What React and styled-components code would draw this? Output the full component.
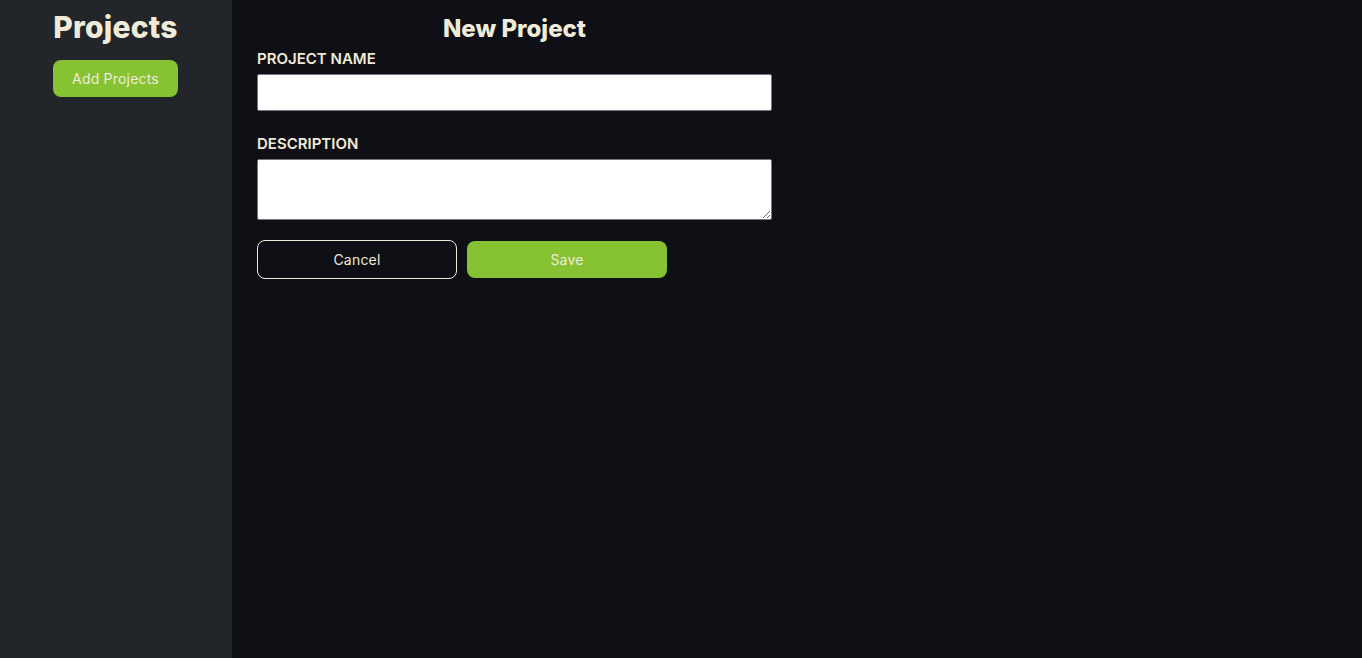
import React from 'react';
import styled, { createGlobalStyle } from 'styled-components';

const GlobalStyle = createGlobalStyle`
  * { box-sizing: border-box; }
  html, body { margin: 0; padding: 0; height: 100%; }
  body {
    background: #0f1015;
    font-family: "Inter", "Open Sans", sans-serif;
    color: #f0ebd8;
  }
  #root { height: 100%; }
`;

const Layout = styled.div`
  display: flex;
  min-height: 658px;
`;

const Sidebar = styled.aside`
  width: 232px;
  flex-shrink: 0;
  background: #222529;
  display: flex;
  flex-direction: column;
  align-items: center;
  padding-top: 8px;
  padding-right: 1px;
`;

const SideTitle = styled.h1`
  margin: 0;
  font-size: 30px;
  font-weight: 800;
  line-height: 38px;
  color: #f0ebd8;
  letter-spacing: 0.2px;
`;

const Button = styled.button`
  font-family: inherit;
  font-size: 14px;
  width: ${p => p.$w || '200px'};
  height: ${p => p.$h || '37px'};
  border-radius: 8px;
  cursor: pointer;
  border: ${p => p.$outline ? '1px solid #f0ebd8' : 'none'};
  background: ${p => p.$outline ? 'transparent' : '#86c232'};
  color: #f0ebd8;
  letter-spacing: 0.2px;
`;

const AddButton = styled(Button)`
  margin-top: 14px;
`;

const Main = styled.main`
  flex: 1;
  padding: 13px 25px;
`;

const Form = styled.form`
  width: 515px;
  display: flex;
  flex-direction: column;
`;

const FormTitle = styled.h2`
  margin: 0 0 4px;
  text-align: center;
  font-size: 24px;
  font-weight: 800;
  line-height: 32px;
  color: #f0ebd8;
`;

const Label = styled.label`
  display: block;
  font-size: 15px;
  font-weight: 600;
  line-height: 20px;
  margin-top: ${p => p.$top || '0px'};
  margin-bottom: 5px;
  color: #f0ebd8;
`;

const Input = styled.input`
  width: 100%;
  height: 37px;
  border: 1px solid #767680;
  border-radius: 2px;
  background: #fff;
  font-family: inherit;
  font-size: 15px;
  padding: 0 8px;
`;

const TextArea = styled.textarea`
  width: 100%;
  height: 61px;
  border: 1px solid #767680;
  border-radius: 2px;
  background: #fff;
  font-family: inherit;
  font-size: 15px;
  padding: 6px 8px;
  display: block;
`;

const Actions = styled.div`
  display: flex;
  align-items: center;
  gap: 10px;
  margin-top: 20px;
`;

export default function App() {
  return (
    <>
      <GlobalStyle />
      <Layout>
        <Sidebar>
          <SideTitle>Projects</SideTitle>
          <AddButton type="button" $w="125px" $h="37px">Add Projects</AddButton>
        </Sidebar>
        <Main>
          <Form onSubmit={e => e.preventDefault()}>
            <FormTitle>New Project</FormTitle>
            <Label htmlFor="name">PROJECT NAME</Label>
            <Input id="name" type="text" />
            <Label htmlFor="desc" $top="23px">DESCRIPTION</Label>
            <TextArea id="desc" />
            <Actions>
              <Button type="button" $outline $h="39px">Cancel</Button>
              <Button type="submit" $h="37px">Save</Button>
            </Actions>
          </Form>
        </Main>
      </Layout>
    </>
  );
}
